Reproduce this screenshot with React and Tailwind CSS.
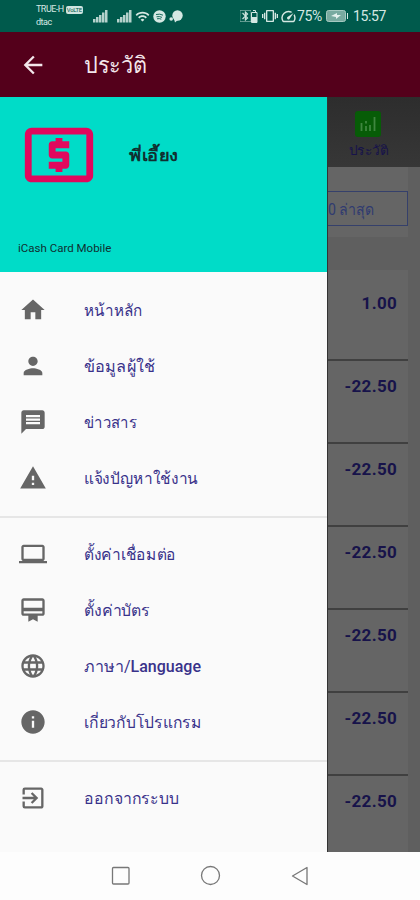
import {
	MdArrowBack,
	MdHome,
	MdPerson,
	MdMessage,
	MdWarning,
	MdLaptop,
	MdCardMembership,
	MdLanguage,
	MdInfo,
	MdExitToApp,
	MdLocalAtm,
	MdBluetooth,
	MdVibration,
	MdSpeed,
	MdWifi,
} from "react-icons/md";

const menuGroups = [
	[
		{ icon: MdHome, label: "หน้าหลัก", width: 59 },
		{ icon: MdPerson, label: "ข้อมูลผู้ใช้", width: 71 },
		{ icon: MdMessage, label: "ข่าวสาร", width: 53 },
		{ icon: MdWarning, label: "แจ้งปัญหาใช้งาน", width: 114 },
	],
	[
		{ icon: MdLaptop, label: "ตั้งค่าเชื่อมต่อ", width: 92 },
		{ icon: MdCardMembership, label: "ตั้งค่าบัตร", width: 66 },
		{ icon: MdLanguage, label: "ภาษา/", bold: "Language", width: 117 },
		{ icon: MdInfo, label: "เกี่ยวกับโปรแกรม", width: 118 },
	],
	[{ icon: MdExitToApp, label: "ออกจากระบบ", width: 95 }],
];

const amounts = ["1.00", "-22.50", "-22.50", "-22.50", "-22.50", "-22.50", "-22.50"];

// Thai text is fitted to a fixed width so it does not depend on the fallback font
function FitText({ children, bold, width, height = 28, size, className }) {
	return (
		<svg width={width} height={height} className={`overflow-visible fill-current ${className || ""}`}>
			<text x="0" y={height * 0.7} fontSize={size} textLength={width} lengthAdjust="spacingAndGlyphs">
				{children}
				{bold && <tspan fontWeight="500">{bold}</tspan>}
			</text>
		</svg>
	);
}

function Signal() {
	return (
		<svg width="15" height="14" viewBox="0 0 15 14" fill="currentColor">
			<path d="M0 10h2.500v3.500H0zM3 8h2.500v5.500H3zM6 6h2.500v7.500H6zM9 3.500h2.500v10H9zM12 1h2.500v12.500H12z" opacity=".85" />
		</svg>
	);
}

function StatusBar() {
	return (
		<div className="flex h-8 shrink-0 items-center bg-[#005a4c] pl-9 pr-[34px] text-[#d5e8e3]">
			<div className="w-[48px] whitespace-nowrap text-[9px] leading-[13px] tracking-[-0.5px]">
				<div className="flex items-center gap-0.5">
					<span>TRUE-H</span>
					<span className="rounded-[2px] bg-[#cfe4df] px-px text-[6px] leading-[8px] tracking-[-0.3px] text-[#005a4c]">VoLTE</span>
				</div>
				<div>dtac</div>
			</div>
			<div className="ml-[9px] flex items-center">
				<Signal />
				<div className="ml-[9px] flex items-center gap-[3px]">
					<Signal />
					<MdWifi className="h-[15px] w-[15px]" />
					<svg width="13" height="13" viewBox="0 0 13 13">
						<circle cx="6.500" cy="6.500" r="6.200" fill="currentColor" />
						<path d="M3 4.500q4-1 7 .7M3.500 6.800q3-.8 5.500.6M4 8.800q2.500-.6 4.300.4" stroke="#005a4c" fill="none" strokeWidth=".9" />
					</svg>
					<svg width="14" height="13" viewBox="0 0 14 13" fill="currentColor">
						<circle cx="8.500" cy="5.500" r="5.200" />
						<circle cx="2.200" cy="9" r="1.800" />
						<path d="M5 9l1 3.500L10 9z" />
					</svg>
				</div>
			</div>
			<div className="ml-auto flex items-center text-[14px]">
				<MdBluetooth className="h-[14px] w-[11px]" strokeWidth="1" />
				<svg width="7" height="13" viewBox="0 0 7 13" className="mr-1">
					<path d="M.5 2.500h5.500v10H.5zM2 .5h2.500v2" fill="none" stroke="currentColor" />
					<path d="M1 7h5v5H1z" fill="currentColor" />
				</svg>
				<MdVibration className="h-[16px] w-[16px]" />
				<MdSpeed className="ml-0.5 h-[17px] w-[17px]" />
				<span className="tracking-tight">75%</span>
				<svg width="23" height="12" viewBox="0 0 23 12" className="ml-1">
					<rect x=".5" y=".5" width="19" height="11" rx="2" fill="#78aaa0" stroke="#a5c9c1" />
					<path d="M5 6l6-3v2h4l-5 4V7z" fill="#e4f1ee" />
					<path d="M21.500 3v6" stroke="currentColor" />
				</svg>
				<span className="ml-1 tracking-tight">15:57</span>
			</div>
		</div>
	);
}

function MenuItem({ item }) {
	const Icon = item.icon;
	return (
		<li className="flex h-14 items-center pl-[19px] text-[#39328a]">
			<Icon className="mr-[37px] h-7 w-7 text-[#666]" />
			<FitText width={item.width} size="16" bold={item.bold}>
				{item.label}
			</FitText>
		</li>
	);
}

function Drawer() {
	return (
		<aside className="w-[327px] shrink-0 bg-[#fafafa]">
			<div className="flex h-[175px] flex-col bg-[#00dcc8] text-[#102f30]">
				<div className="flex items-center pl-[18px] pt-[17px]">
					<MdLocalAtm className="h-[82px] w-[82px] text-[#e1085d]" />
					<FitText width={49} size="16" className="ml-[29px] font-bold">พี่เอี้ยง</FitText>
				</div>
				<p className="mt-auto pb-[15px] pl-[18px] text-[11.500px] leading-[17px]">iCash Card Mobile</p>
			</div>
			{menuGroups.map((group, i) => (
				<ul key={i} className={i === 0 ? "py-[10px]" : "border-t-2 border-[#e6e6e6] pb-[10px] pt-2"}>
					{group.map((item) => (
						<MenuItem key={item.label} item={item} />
					))}
				</ul>
			))}
		</aside>
	);
}

function History() {
	return (
		<main className="flex min-w-0 flex-1 flex-col border-l border-[#333] bg-[#5f5f5f] text-[#17134a]">
			<div className="flex h-[70px] shrink-0 flex-col items-center bg-gradient-to-b from-[#2d2d2d] to-[#373737] pr-3 pt-[14px]">
				<svg width="26" height="26" viewBox="0 0 26 26">
					<rect width="26" height="26" rx="3" fill="#075c07" />
					<path d="M6.500 12v8M11 15v5M11 10v2.500M15 14v6M19.500 6v14" fill="none" stroke="#3f873f" strokeWidth="1.800" />
				</svg>
				<FitText width={39} height={22} size="13" className="mt-[3px] font-medium">ประวัติ</FitText>
			</div>
			<div className="mr-3 h-[70px] shrink-0 bg-[#656565] pt-6">
				<div className="flex h-[35px] items-center border border-l-0 border-[#35406b] text-[#303b70]">
					<FitText width={46} size="16">0 ล่าสุด</FitText>
				</div>
			</div>
			<div className="mr-3 mt-[33px] flex-1 bg-[#656565]">
				{amounts.map((amount, i) => (
					<div
						key={i}
						className={
							i === 0
								? "flex h-[89px] items-start justify-end pr-[11px] pt-[21px]"
								: "flex h-[83px] items-start justify-end border-t-2 border-[#404040] pr-[11px] pt-[13px]"
						}
					>
						<span className="text-[17px] font-bold leading-6 tracking-[0.3px]">{amount}</span>
					</div>
				))}
			</div>
		</main>
	);
}

export default function App() {
	return (
		<div className="flex h-[900px] w-[420px] flex-col overflow-hidden bg-[#fdfdfd] font-[Roboto,serif]">
			<StatusBar />
			<header className="flex h-[65px] shrink-0 items-center bg-[#54001b] pl-[19px] text-[#f3e7eb]">
				<MdArrowBack className="mr-[37px] h-7 w-7" />
				<FitText width={63} size="23" className="mt-1 font-medium">ประวัติ</FitText>
			</header>
			<div className="flex h-[755px] shrink-0 overflow-hidden">
				<Drawer />
				<History />
			</div>
			<nav className="flex h-12 items-center pl-[111px] text-[#777]">
				<svg width="200" height="22" viewBox="0 0 200 22" fill="none" stroke="currentColor" strokeWidth="1.300">
					<rect x="1.500" y="2.500" width="16.500" height="16.500" rx="1" />
					<circle cx="99.500" cy="10.500" r="9" />
					<path d="M196 2.500v17L181.500 11z" strokeLinejoin="round" />
				</svg>
			</nav>
		</div>
	);
}
